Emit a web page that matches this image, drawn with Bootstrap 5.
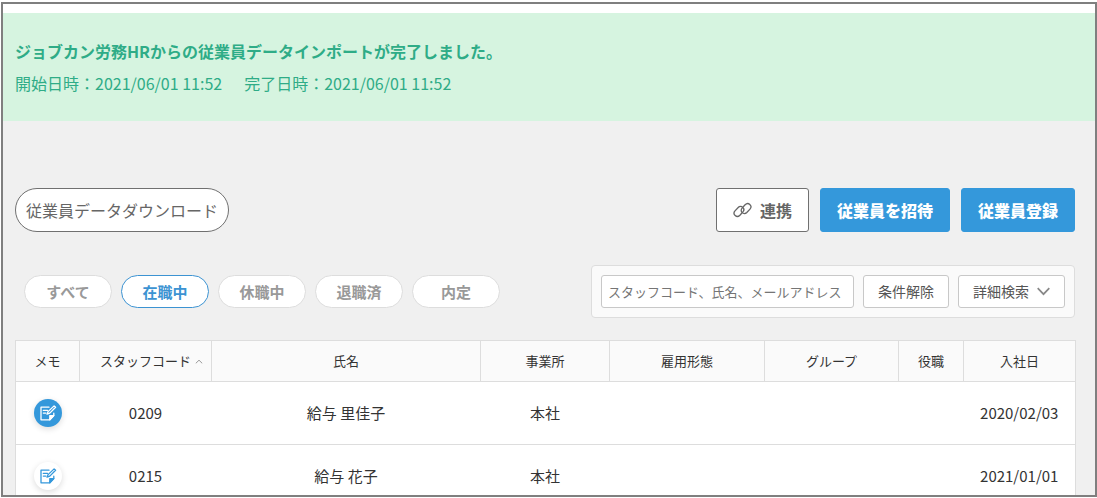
<!DOCTYPE html>
<html lang="ja">
<head>
<meta charset="utf-8">
<meta name="viewport" content="width=device-width, initial-scale=1">
<title>従業員一覧</title>
<link href="https://cdn.jsdelivr.net/npm/bootstrap@5.3.0/dist/css/bootstrap.min.css" rel="stylesheet">
<style>
  body { font-family: "Noto Sans CJK JP", "Noto Sans", sans-serif; font-size: 15px; color: #333; background: #fff; padding: 2px 0 1px 1px; }
  .app-frame { border: 2px solid #7f7f7f; background: #f0f0f0; padding-top: 9px; background-clip: padding-box; }
  .top-strip { height: 9px; margin-top: -9px; background: #fff; }
  .notice { background: #d6f4e0; color: #2fac87; font-size: 16px; line-height: 32px; padding: 22px 12px; }
  .notice-times { column-gap: 22px; }
  .staff-area { padding: 67px 20px 0 12px; }
  .btn { white-space: nowrap; }
  .action-row { gap: 11px; }
  .action-btn { height: 44px; padding: 0 16px; font-size: 16px; border-radius: 3px; font-weight: 700; }
  .btn-download { padding: 0 10px; font-weight: 400; border-radius: 22px; }
  .btn-plain { background: #fff; border-color: #707070; color: #666; }
  .btn-blue { background: #3498db; border-color: #3498db; color: #fff; font-weight: 900; }
  .filter-row { margin-top: 33px; margin-bottom: 22px; }
  .pill-list { gap: 9px; margin-left: 9px; }
  .pill-btn { width: 88px; height: 33px; padding: 0; line-height: 31px; font-size: 15px; font-weight: 700; border-radius: 17px; background: #fff; border-color: #ddd; color: #999; }
  .pill-btn.active { background: #fff; border-color: #3c93d2; color: #3c93d2; }
  .search-box { gap: 9px; padding: 9px; background: #fafafa; border: 1px solid #ddd; border-radius: 4px; }
  .search-box .form-control { width: 253px; height: 33px; padding: 0 6px; font-size: 13px; border-color: #c8c8c8; border-radius: 3px; }
  .form-control::placeholder { color: #757575; }
  .search-btn { height: 33px; padding: 0 14px; font-size: 14px; line-height: 31px; background: #fff; border-color: #c8c8c8; border-radius: 3px; color: #555; }
  .staff-table { table-layout: fixed; width: 100%; background: #fff; border: 1px solid #ddd; text-align: center; border-collapse: collapse; }
  .staff-table th { height: 41px; padding: 0; font-size: 13px; font-weight: 400; background: #fafafa; border: 1px solid #ddd; white-space: nowrap; }
  .staff-table td { height: 63px; padding: 0; border-bottom: 1px solid #ddd; }
  .c-memo { width: 64px; } .c-code { width: 132px; } .c-name { width: 269px; } .c-office { width: 129px; }
  .c-type { width: 155px; } .c-group { width: 134px; } .c-post { width: 65px; } .c-date { width: 112px; }
  .sort-head { gap: 4px; padding-left: 12px; }
  .memo-btn { width: 28px; height: 28px; border-radius: 50%; background: #fff; color: #3498db; box-shadow: 0 2px 6px rgba(0,0,0,.14); }
  .memo-btn.has-memo { background: #3498db; color: #fff; }
</style>
</head>
<body class="vh-100 d-flex">
<svg class="d-none" aria-hidden="true">
  <symbol id="memo" viewBox="0 0 18 18">
    <g fill="none" stroke="currentColor" stroke-width="1.3" stroke-linejoin="round" stroke-linecap="round">
      <path d="M10 3.2H2v12.6h8.8l4-4.2V9.2M4.3 6.4h4.2M4.3 9.1h2.6"/>
      <path d="M8 10.2l1.1-2.6 6-5.7 1.5 1.4-5.8 5.8z"/>
      <path d="M10.8 15.8v-4.2h4z" fill="currentColor"/>
    </g>
  </symbol>
</svg>
<div class="app-frame flex-grow-1 overflow-hidden">
  <div class="top-strip"></div>
  <div class="notice" role="status">
    <div class="fw-bold">ジョブカン労務HRからの従業員データインポートが完了しました。</div>
    <div class="notice-times d-flex flex-wrap"><span>開始日時：2021/06/01 11:52</span><span>完了日時：2021/06/01 11:52</span></div>
  </div>
  <main class="staff-area">
    <div class="d-flex justify-content-between">
      <button type="button" class="btn action-btn btn-plain btn-download">従業員データダウンロード</button>
      <div class="d-flex action-row">
        <button type="button" class="btn action-btn btn-plain d-flex align-items-center gap-2">
          <svg width="19" height="16" viewBox="0 0 19 16" fill="none" stroke="currentColor" stroke-width="1.3" stroke-linecap="round" aria-hidden="true">
            <path d="M8.7 11.2l-1.8 2C5.500 14.600 3.600 14.800 2.200 13.500S.8 10.200 2 8.900l3.200-3.400c1.300-1.300 3.300-1.400 4.600-.1 1.300 1.200 1.300 3.200.1 4.500l-.6.600"/>
            <path d="M10.300 4.800l1.800-2c1.400-1.400 3.300-1.600 4.700-.3s1.400 3.300.2 4.600l-3.200 3.400c-1.300 1.300-3.300 1.400-4.600.1-1.300-1.200-1.300-3.200-.1-4.500l.6-.6"/>
          </svg>連携</button>
        <button type="button" class="btn action-btn btn-blue">従業員を招待</button>
        <button type="button" class="btn action-btn btn-blue">従業員登録</button>
      </div>
    </div>
    <div class="filter-row d-flex justify-content-between align-items-center">
      <div class="pill-list d-flex">
        <button type="button" class="btn pill-btn">すべて</button>
        <button type="button" class="btn pill-btn active" aria-pressed="true">在職中</button>
        <button type="button" class="btn pill-btn">休職中</button>
        <button type="button" class="btn pill-btn">退職済</button>
        <button type="button" class="btn pill-btn">内定</button>
      </div>
      <form class="search-box d-flex">
        <input type="text" class="form-control" placeholder="スタッフコード、氏名、メールアドレス" aria-label="スタッフコード、氏名、メールアドレス">
        <button type="reset" class="btn search-btn">条件解除</button>
        <button type="button" class="btn search-btn d-flex align-items-center">詳細検索
          <svg class="ms-2" width="13" height="9" viewBox="0 0 13 9" fill="none" stroke="#888" stroke-width="1.700" aria-hidden="true"><path d="M.7 1.200l5.800 6 5.800-6"/></svg></button>
      </form>
    </div>
    <table class="staff-table">
      <thead>
        <tr>
          <th scope="col" class="c-memo">メモ</th>
          <th scope="col" class="c-code"><span class="sort-head d-flex align-items-center justify-content-center">スタッフコード<svg width="8" height="5" viewBox="0 0 8 5" fill="none" stroke="#999" aria-hidden="true"><path d="M.8 4.300L4 1.200l3.200 3.100"/></svg></span></th>
          <th scope="col" class="c-name">氏名</th>
          <th scope="col" class="c-office">事業所</th>
          <th scope="col" class="c-type">雇用形態</th>
          <th scope="col" class="c-group">グループ</th>
          <th scope="col" class="c-post">役職</th>
          <th scope="col" class="c-date">入社日</th>
        </tr>
      </thead>
      <tbody>
        <tr>
          <td><button type="button" class="btn memo-btn has-memo border-0 p-0 d-inline-flex align-items-center justify-content-center" aria-label="メモ"><svg width="18" height="18"><use href="#memo"/></svg></button></td>
          <td>0209</td><td>給与 里佳子</td><td>本社</td><td></td><td></td><td></td><td>2020/02/03</td>
        </tr>
        <tr>
          <td><button type="button" class="btn memo-btn border-0 p-0 d-inline-flex align-items-center justify-content-center" aria-label="メモ"><svg width="18" height="18"><use href="#memo"/></svg></button></td>
          <td>0215</td><td>給与 花子</td><td>本社</td><td></td><td></td><td></td><td>2021/01/01</td>
        </tr>
      </tbody>
    </table>
  </main>
</div>
<script src="https://cdn.jsdelivr.net/npm/bootstrap@5.3.0/dist/js/bootstrap.bundle.min.js"></script>
</body>
</html>
